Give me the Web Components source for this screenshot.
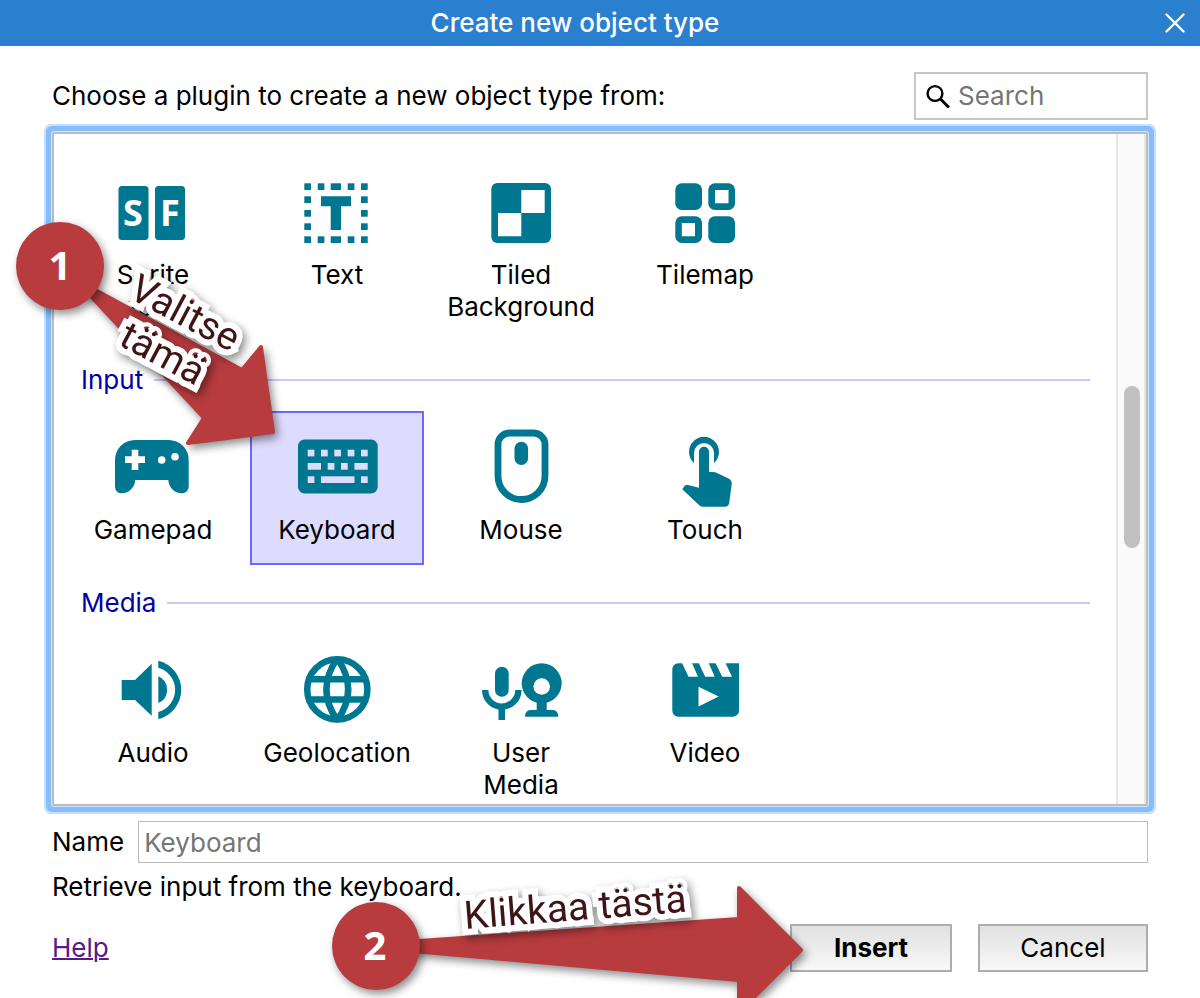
<!DOCTYPE html>
<html lang="en">
<head>
<meta charset="utf-8">
<title>Create new object type</title>
<style>
  body { margin: 0; background: #fff; color: #000; font: 26px/32px Inter, "Liberation Sans", sans-serif; }
</style>
</head>
<body>
<object-dialog></object-dialog>

<template id="dialog-tpl">
  <style>
    :host { display: flex; flex-direction: column; min-height: 100vh; position: relative; overflow: hidden; }
    main { display: flex; flex-direction: column; flex: 1; padding: 26px 52px; }
    .top { display: flex; justify-content: space-between; align-items: center; margin-bottom: 12px; }
    .name { display: flex; align-items: center; gap: 14px; margin-top: 15px; }
    .name input { flex: 1; min-width: 0; height: 42px; box-sizing: border-box; border: 1px solid #bbb; padding: 0 5px; font: inherit; color: #000; border-radius: 0; }
    input::placeholder { color: #757575; opacity: 1; }
    p { margin: 8px 0 21px; }
    footer { display: flex; align-items: center; gap: 26px; }
    a { margin-right: auto; color: #551a8b; text-decoration-thickness: 2px; }
  </style>
  <title-bar>Create new object type</title-bar>
  <main>
    <div class="top"><span>Choose a plugin to create a new object type from:</span><search-box></search-box></div>
    <plugin-list>
      <plugin-group>
        <plugin-tile icon="spritefont">Sprite font</plugin-tile>
        <plugin-tile icon="text">Text</plugin-tile>
        <plugin-tile icon="tiled">Tiled Background</plugin-tile>
        <plugin-tile icon="tilemap">Tilemap</plugin-tile>
      </plugin-group>
      <plugin-group heading="Input">
        <plugin-tile icon="gamepad">Gamepad</plugin-tile>
        <plugin-tile icon="keyboard" selected>Keyboard</plugin-tile>
        <plugin-tile icon="mouse">Mouse</plugin-tile>
        <plugin-tile icon="touch">Touch</plugin-tile>
      </plugin-group>
      <plugin-group heading="Media">
        <plugin-tile icon="audio">Audio</plugin-tile>
        <plugin-tile icon="geo">Geolocation</plugin-tile>
        <plugin-tile icon="usermedia">User Media</plugin-tile>
        <plugin-tile icon="video">Video</plugin-tile>
      </plugin-group>
    </plugin-list>
    <div class="name"><label for="nm">Name</label><input id="nm" type="text" placeholder="Keyboard"></div>
    <p>Retrieve input from the keyboard.</p>
    <footer>
      <a href="#help">Help</a>
      <dialog-button primary>Insert</dialog-button>
      <dialog-button>Cancel</dialog-button>
    </footer>
  </main>
  <guide-overlay></guide-overlay>
</template>

<template id="title-tpl">
  <style>
    :host { display: flex; align-items: center; height: 46px; background: #2a80ce; color: #fff; font-weight: 500; }
    span { flex: 1; text-align: center; }
    button { width: 50px; height: 46px; padding: 0; border: 0; background: none; color: inherit; }
    svg { display: block; margin: auto; }
  </style>
  <span><slot></slot></span>
  <button type="button" aria-label="Close"><svg width="20" height="20" viewBox="0 0 20 20" fill="none" stroke="currentColor" stroke-width="2.4" stroke-linecap="round"><path d="M1.5 1.5l17 17M18.5 1.5l-17 17"/></svg></button>
</template>

<template id="search-tpl">
  <style>
    :host { display: block; width: 234px; }
    label { display: flex; align-items: center; gap: 8px; height: 48px; box-sizing: border-box; border: 2px solid #c8c8c8; padding: 0 10px; }
    svg { flex: none; }
    input { flex: 1; min-width: 0; border: 0; padding: 0; outline: 0; background: none; font: inherit; }
    input::placeholder { color: #757575; opacity: 1; }
  </style>
  <label><svg width="24" height="24" viewBox="0 0 24 24" fill="none" stroke="#000" stroke-width="2.4"><circle cx="9" cy="9.5" r="7.4"/><path d="M14.5 15L23 23.5" stroke-width="3"/></svg><input type="text" placeholder="Search" aria-label="Search"></label>
</template>

<template id="list-tpl">
  <style>
    :host { display: flex; height: 674px; box-sizing: border-box; border: 2px solid #bcbcbc; border-radius: 2px; background: #fff;
      box-shadow: 0 0 0 1px #cfe4fc, 0 0 0 6px #85bdfd, 0 0 0 8px #c4e0fe; }
    .view { flex: 1; min-width: 0; overflow: hidden; padding: 22px 0 0 12px; }
    .bar { display: flex; flex-direction: column; align-items: center; width: 30px; box-sizing: border-box; padding-left: 2px; background: #fafafa; border: solid #e7e7e7; border-width: 0 2px; }
    .bar i { flex: 256; }
    .bar i:first-child { flex: 252; }
    .bar b { flex: 162; width: 16px; border-radius: 8px; background: #c1c1c1; }
  </style>
  <div class="view"><slot></slot></div>
  <div class="bar" aria-hidden="true"><i></i><b></b><i></i></div>
</template>

<template id="group-tpl">
  <style>
    :host { display: block; }
    h2 { display: flex; align-items: center; gap: 11px; margin: 22px 26px 15px 15px; font: inherit; color: #0000a5; }
    h2::after { content: ""; flex: 1; height: 2px; background: #c8c8ff; }
    h2[hidden] { display: none; }
    div { display: grid; grid-template-columns: repeat(auto-fill, 174px); gap: 10px; padding-right: 240px; align-items: start; }
  </style>
  <h2></h2>
  <div><slot></slot></div>
</template>

<template id="tile-tpl">
  <style>
    :host { display: block; }
    button { display: flex; flex-direction: column; align-items: center; gap: 7px; width: 100%; padding: 14px 0 17px; border: 2px solid transparent; background: none; color: inherit; font: inherit; --hole: #fff; }
    :host([selected]) button { border-color: #6a6aff; background: #dddcff; --hole: #dddcff; }
    svg { display: block; overflow: visible; fill: #007790; }
    .h { fill: var(--hole); }
    .s { fill: none; stroke: #007790; }
    text { font: 700 36px "Open Sans", sans-serif; fill: #fff; text-anchor: middle; }
    span { width: min-content; }
  </style>
  <button type="button"><svg width="80" height="80" viewBox="0 0 80 80" aria-hidden="true"></svg><span><slot></slot></span></button>
</template>

<template id="button-tpl">
  <style>
    :host { display: block; width: 170px; }
    :host([primary]) { width: 162px; font-weight: 700; }
    button { display: block; width: 100%; height: 48px; padding: 0; border: 2px solid #adadad; background: linear-gradient(#e1e1e1, #f8f8f8); color: #000; font: inherit; }
  </style>
  <button type="button"><slot></slot></button>
</template>

<template id="guide-tpl">
  <style>
    :host { display: block; position: absolute; inset: 0; overflow: hidden; pointer-events: none; }
    svg { display: block; }
    .shade { filter: drop-shadow(3px 4px 4px rgba(0,0,0,.45)); }
    .red { fill: #b83b3e; stroke: #b83b3e; stroke-width: 4; stroke-linejoin: round; }
    .dot { fill: #b83b3e; }
    .num { font: 700 40px "Open Sans", sans-serif; fill: #fff; text-anchor: middle; }
    .note { font: 400 39px Roboto, sans-serif; fill: #3f1416; stroke: #fff; stroke-width: 12; paint-order: stroke; }
  </style>
  <svg width="1200" height="1040" viewBox="0 0 1200 1040">
    <g class="shade"><path class="red" d="M75 279L242 370L261 347L273 432L188 443L204 418Z"/></g>
    <g class="shade"><circle class="dot" cx="60" cy="266" r="44"/></g>
    <text class="num" x="60" y="280">1</text>
    <g class="shade">
      <text class="note" transform="translate(127 297) rotate(28)">Valitse</text>
      <text class="note" transform="translate(117 344) rotate(28)">tämä</text>
    </g>
    <g class="shade"><path class="red" d="M390 943L739 919V888L801 950L739 1012V980L390 949Z"/></g>
    <g class="shade"><circle class="dot" cx="376" cy="946" r="44"/></g>
    <text class="num" x="375" y="960">2</text>
    <g class="shade"><text class="note" transform="translate(465 929) rotate(-4.5)">Klikkaa tästä</text></g>
  </svg>
</template>

<script>
const dots = (pts, w = 6.7, h = 6.7) => pts.map(([x, y, ww]) => `<rect x="${x}" y="${y}" width="${ww || w}" height="${h}"/>`).join('');
const cols = [[7.3], [20.7], [33.7, 10.3], [50.7], [64]];
const ICONS = {
  spritefont: `<rect x="5.5" y="14" width="30" height="54" rx="3.5"/><rect x="42" y="14" width="30" height="54" rx="3.5"/><text x="20" y="54">S</text><text x="57" y="54">F</text>`,
  text: dots([11.3, 64.3].flatMap(y => cols.map(([x, w]) => [x, y, w])).concat([24.3, 38, 51.3].flatMap(y => [[7.3, y], [64, y]]))) +
    `<path d="M24 24.3H54V34.3H44V58H33.7V34.3H24Z"/>`,
  tiled: `<rect x="10.3" y="11" width="59.7" height="60" rx="6"/><path class="h" d="M40.3 18H63.7V41H40.3ZM17 41H40.3V64.3H17Z"/>`,
  tilemap: `<rect x="10.3" y="11.3" width="26.7" height="26.7" rx="6.5"/><rect x="43.3" y="11.3" width="26.7" height="26.7" rx="6.5"/><rect x="10.3" y="44.3" width="26.7" height="26.7" rx="6.5"/><rect x="43.3" y="44.3" width="26.7" height="26.7" rx="6.5"/><path class="h" d="M50 18H63.5V31.3H50ZM16.8 51H30V64.3H16.8Z"/>`,
  gamepad: `<path d="M22 13H55.7A20 20 0 0 1 75.7 33V60A6.5 6.5 0 0 1 69 66.3C61 66.3 55.7 60 55.3 53H22.3C22 60 16 66.3 9 66.3A6.5 6.5 0 0 1 2 60V33A20 20 0 0 1 22 13Z"/><path class="h" d="M18.7 22.7H25.3V29.3H32V36H25.3V43H18.7V36H12V29.3H18.7Z"/><circle class="h" cx="48.7" cy="33" r="3.8"/><circle class="h" cx="62" cy="29.7" r="3.8"/>`,
  keyboard: `<rect x="1" y="12.5" width="79.7" height="54" rx="6.5"/><g class="h">` +
    dots([10.7, 24, 37.3, 50.7, 64].map(x => [x, 22.7]).concat([[10.7, 36, 13.3], [30.7, 36], [44, 36], [57.4, 36, 13.3], [10.7, 49.3], [24, 49.3, 33.5], [64, 49.3]])) + `</g>`,
  mouse: `<path class="s" stroke-width="6.8" d="M28 6H53A11.5 11.5 0 0 1 64 17.5V49A23.5 23.5 0 0 1 17 49V17.5A11.5 11.5 0 0 1 28 6Z"/><rect x="33.5" y="14.7" width="13.6" height="23.3" rx="6.8"/>`,
  touch: `<path d="M29 36A15 15 0 1 1 49 36V26A10 10 0 0 0 29 26Z"/><path d="M34 24.7A5 5 0 0 1 44 24.7V45H48Q50 45 52 46L64.5 52Q67 53.5 66.7 57L64.3 75.5Q63.7 79.7 60 79.7H37.5Q35.5 79.7 34 78L17.3 62.3L19.5 59Q20.6 57.6 23 58L34 60.7Z"/>`,
  audio: `<path d="M8.7 30H22L38.7 13.7V65.7L22 50H8.7ZM45.3 10.7A30 30 0 0 1 45.3 69V62A23 23 0 0 0 45.3 17.7ZM45.3 26.3A14.5 14.5 0 0 1 45.3 53Z"/>`,
  geo: `<g class="s" stroke-width="6.5" stroke-linejoin="bevel"><circle cx="40.3" cy="39.4" r="30.1"/><path d="M40.3 8.5Q18.500 39.4 40.3 70.3Q62.100 39.4 40.3 8.5ZM13 29.200H67.6M13 49.6H67.6"/></g>`,
  usermedia: `<rect x="14" y="16.7" width="13.7" height="30" rx="6.8"/><path class="s" stroke-width="6.4" d="M4.2 40A16.6 16.6 0 0 0 37.4 40"/><path d="M17.5 58H24V70H17.5Z"/><circle cx="60.7" cy="33.3" r="20"/><path d="M55.7 50H65.7V60H72Q77.3 60.5 77.3 66.7H44Q44 60.5 49.5 60H55.7Z"/><circle class="h" cx="60.7" cy="36.5" r="8.3"/>`,
  video: `<path d="M13.5 13.3H74V60.5A6 6 0 0 1 68 66.7H13.5A6 6 0 0 1 7.3 60.5V19.5A6 6 0 0 1 13.5 13.3Z"/><path class="h" d="M17 13H27L33 26.7H23.5ZM33.7 13H43.7L49.7 26.7H40.2ZM50.5 13H60.5L67 26.7H57.2ZM33.5 36.7L53.7 46.5L33.5 56.4Z"/>`
};

const define = (tag, tpl, setup) => customElements.define(tag, class extends HTMLElement {
  constructor() {
    super();
    this.attachShadow({ mode: 'open' }).append(document.getElementById(tpl).content.cloneNode(true));
  }
  connectedCallback() { if (setup) setup(this, this.shadowRoot); }
});

define('title-bar', 'title-tpl');
define('search-box', 'search-tpl');
define('plugin-list', 'list-tpl');
define('plugin-group', 'group-tpl', (el, root) => {
  const h = root.querySelector('h2');
  h.textContent = el.getAttribute('heading') || '';
  h.hidden = !h.textContent;
});
define('plugin-tile', 'tile-tpl', (el, root) => {
  root.querySelector('svg').innerHTML = ICONS[el.getAttribute('icon')];
  root.querySelector('button').setAttribute('aria-pressed', el.hasAttribute('selected'));
});
define('dialog-button', 'button-tpl');
define('guide-overlay', 'guide-tpl');
define('object-dialog', 'dialog-tpl');
</script>
</body>
</html>
